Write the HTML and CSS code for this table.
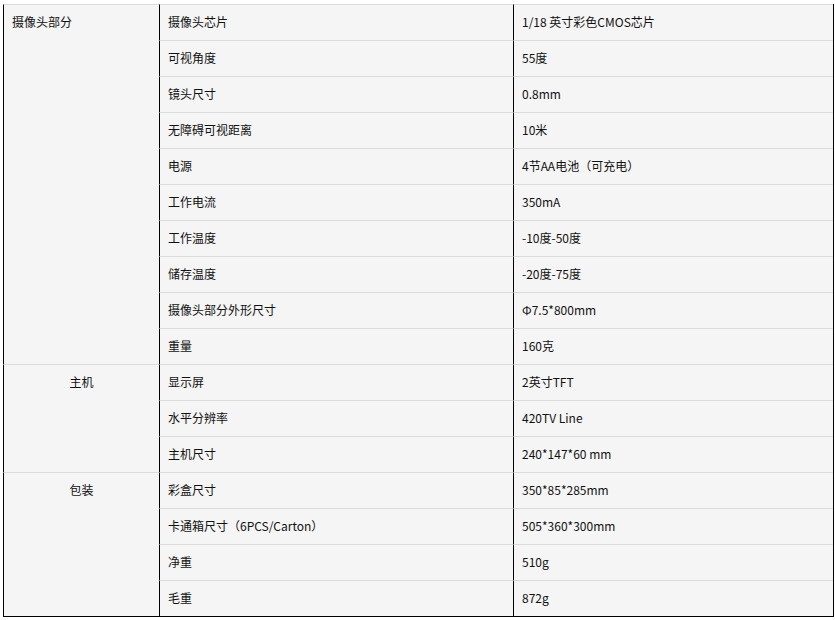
FILE: index.html
```html
<!DOCTYPE html>
<html lang="zh">
<head>
<meta charset="utf-8">
<title>参数</title>
<link rel="stylesheet" href="styles.css">
</head>
<body>
<table class="spec">
  <colgroup>
    <col class="c1"><col class="c2"><col class="c3">
  </colgroup>
  <tbody>
    <tr><td class="group left" rowspan="10">摄像头部分</td><td>摄像头芯片</td><td>1/18 英寸彩色CMOS芯片</td></tr>
    <tr><td>可视角度</td><td>55度</td></tr>
    <tr><td>镜头尺寸</td><td>0.8mm</td></tr>
    <tr><td>无障碍可视距离</td><td>10米</td></tr>
    <tr><td>电源</td><td>4节AA电池（可充电）</td></tr>
    <tr><td>工作电流</td><td>350mA</td></tr>
    <tr><td>工作温度</td><td>-10度-50度</td></tr>
    <tr><td>储存温度</td><td>-20度-75度</td></tr>
    <tr><td>摄像头部分外形尺寸</td><td>Φ7.5*800mm</td></tr>
    <tr><td>重量</td><td>160克</td></tr>
    <tr><td class="group center" rowspan="3">主机</td><td>显示屏</td><td>2英寸TFT</td></tr>
    <tr><td>水平分辨率</td><td>420TV Line</td></tr>
    <tr><td>主机尺寸</td><td>240*147*60 mm</td></tr>
    <tr><td class="group center" rowspan="4">包装</td><td>彩盒尺寸</td><td>350*85*285mm</td></tr>
    <tr><td>卡通箱尺寸（6PCS/Carton）</td><td>505*360*300mm</td></tr>
    <tr><td>净重</td><td>510g</td></tr>
    <tr><td>毛重</td><td>872g</td></tr>
  </tbody>
</table>
</body>
</html>
```
FILE: styles.css
```css
html, body {
  margin: 0;
  padding: 0;
  background: #ffffff;
}

.spec {
  margin: 4px 0 0 3px;
  border-collapse: separate;
  border-spacing: 0;
  table-layout: fixed;
  width: 830px;
  background: #f5f5f5;
  border-right: 1px solid #000;
  border-bottom: 1px solid #000;
  font-family: "Microsoft YaHei", "Noto Sans CJK SC", "Noto Sans", sans-serif;
  font-size: 12px;
  color: #111;
}

.c1 { width: 156px; }
.c2 { width: 354px; }
.c3 { width: 320px; }

.spec td {
  box-sizing: border-box;
  height: 36px;
  padding: 0 8px 1px;
  line-height: 34px;
  border-left: 1px solid #000;
  border-top: 1px solid #dcdcdc;
  vertical-align: middle;
  white-space: nowrap;
}

.spec td.group {
  vertical-align: top;
}

.spec td.left { text-align: left; }
.spec td.center { text-align: center; }
```
